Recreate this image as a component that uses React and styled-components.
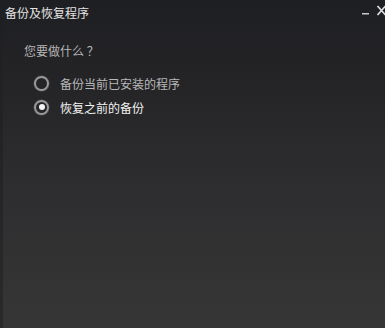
import React, { useState } from "react";
import styled, { createGlobalStyle } from "styled-components";

const Global = createGlobalStyle`
  html, body { margin: 0; padding: 0; background: #1f2023; }
  body { font-family: "Noto Sans CJK SC", "Liberation Sans", sans-serif; }
`;

const Window = styled.div`
  width: 385px;
  height: 328px;
  display: flex;
  overflow: hidden;
  background: linear-gradient(180deg, #1e1f22 0%, #232326 20%, #2d2d2f 55%, #363636 100%);
`;

const EdgeStrip = styled.div`
  width: 3px;
  flex: none;
  background: linear-gradient(180deg, #1e1f22 0%, #232326 40%, #2a2a2d 100%);
`;

const Main = styled.div`
  flex: 1;
  display: flex;
  flex-direction: column;
  min-width: 0;
`;

const TitleBar = styled.div`
  height: 25px;
  display: flex;
  align-items: center;
  padding-left: 2px;
  position: relative;
`;

const Title = styled.div`
  font-size: 12px;
  line-height: 14px;
  color: #e4e4e4;
`;

const Controls = styled.div`
  position: absolute;
  right: -2px;
  top: 3px;
  display: flex;
  align-items: center;
  gap: 5px;
`;

const Body = styled.div`
  display: flex;
  flex-direction: column;
  padding: 18px 0 0 21px;
`;

const Question = styled.div`
  font-size: 12px;
  line-height: 16px;
  color: #b4b4b4;
  margin-bottom: 16px;
`;

const Options = styled.div`
  display: flex;
  flex-direction: column;
  gap: 8px;
  padding-left: 10px;
`;

const Option = styled.label`
  display: flex;
  align-items: center;
  gap: 11px;
  height: 16px;
  cursor: pointer;
  color: ${(p) => (p.$checked ? "#f2f2f2" : "#b8b8b8")};
  font-size: 12px;
`;

const Radio = styled.span`
  width: 11px;
  height: 11px;
  border-radius: 50%;
  border: 2px solid #9a9a9a;
  box-shadow: 0 0 0 0.5px #555;
  display: flex;
  align-items: center;
  justify-content: center;
  flex: none;
  &::after {
    content: "";
    width: 6px;
    height: 6px;
    border-radius: 50%;
    background: #f4f4f4;
    display: ${(p) => (p.$checked ? "block" : "none")};
  }
`;

const options = ["备份当前已安装的程序", "恢复之前的备份"];

export default function App() {
  const [sel, setSel] = useState(1);
  return (
    <>
      <Global />
      <Window>
        <EdgeStrip />
        <Main>
          <TitleBar>
            <Title>备份及恢复程序</Title>
            <Controls>
              <svg width="10" height="16" viewBox="0 0 10 16">
                <rect x="1" y="10" width="7" height="1.5" fill="#c8c8c8" />
              </svg>
              <svg width="11" height="16" viewBox="0 0 11 16">
                <path d="M1.5 3 L9.5 12 M9.5 3 L1.5 12" stroke="#e0e0e0" strokeWidth="1.7" />
              </svg>
            </Controls>
          </TitleBar>
          <Body>
            <Question>您要做什么 ？</Question>
            <Options>
              {options.map((o, i) => (
                <Option key={o} $checked={sel === i} onClick={() => setSel(i)}>
                  <Radio $checked={sel === i} />
                  {o}
                </Option>
              ))}
            </Options>
          </Body>
        </Main>
      </Window>
    </>
  );
}
